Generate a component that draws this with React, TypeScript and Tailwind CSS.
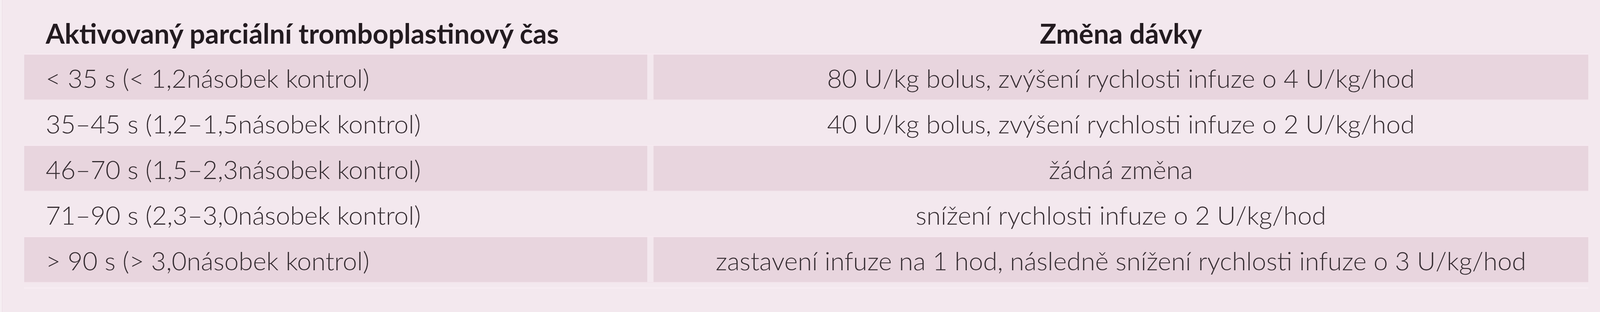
const rows = [
  {
    aptt: "< 35 s (< 1,2násobek kontrol)",
    change: "80 U/kg bolus, zvýšení rychlosti infuze o 4 U/kg/hod",
  },
  {
    aptt: "35–45 s (1,2–1,5násobek kontrol)",
    change: "40 U/kg bolus, zvýšení rychlosti infuze o 2 U/kg/hod",
  },
  {
    aptt: "46–70 s (1,5–2,3násobek kontrol)",
    change: "žádná změna",
  },
  {
    aptt: "71–90 s (2,3–3,0násobek kontrol)",
    change: "snížení rychlosti infuze o 2 U/kg/hod",
  },
  {
    aptt: "> 90 s (> 3,0násobek kontrol)",
    change: "zastavení infuze na 1 hod, následně snížení rychlosti infuze o 3 U/kg/hod",
  },
];

export default function App() {
  return (
    <div className="h-[800px] w-full bg-[#f6eef2] pl-[5px] font-['Lato',sans-serif]">
      <div className="h-full border-l border-[#e9dce3] bg-[#f3e8ee] pl-[56px] pr-[30px]">
        {/* header */}
        <div className="grid h-[140px] grid-cols-[1595px_1fr] gap-x-[16px] border-b-[3px] border-[#f7eaf1] text-[70px] font-bold leading-none text-[#231b20]">
          <div className="pl-[55px] pt-[50px]">Aktivovaný parciální tromboplastinový čas</div>
          <div className="pt-[50px] text-center">Změna dávky</div>
        </div>

        {rows.map((row, i) => {
          const shaded = i % 2 === 0;
          return (
            <div
              key={i}
              className={`grid h-[117px] grid-cols-[1595px_1fr] gap-x-[16px] border-b-[2px] text-[66px] font-light leading-none text-[#362d32] ${
                shaded ? "border-[#f2e4eb]" : "border-[#f7eaf1]"
              }`}
            >
              <div className={`flex items-center pl-[55px] pt-[4px] ${shaded ? "bg-[#e8d5de]" : ""}`}>
                {row.aptt}
              </div>
              <div className={`flex items-center justify-center pt-[4px] ${shaded ? "bg-[#e8d5de]" : ""}`}>
                {row.change}
              </div>
            </div>
          );
        })}

        <div className="mt-[12px] h-[3px] bg-[#f8edf3]" />
      </div>
    </div>
  );
}
